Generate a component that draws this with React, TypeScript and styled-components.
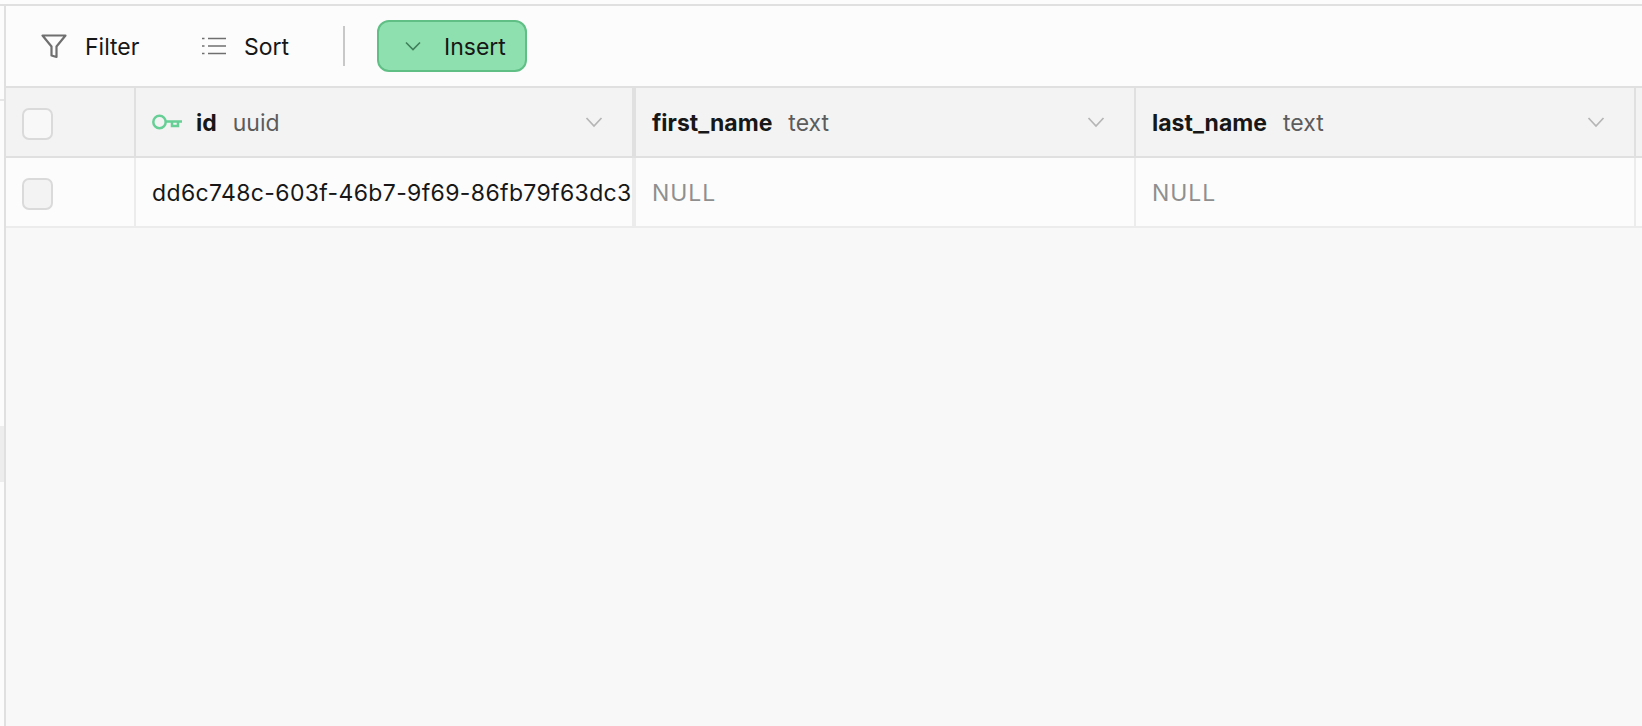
import React from 'react';
import styled, { createGlobalStyle } from 'styled-components';

const GlobalStyle = createGlobalStyle`
  html, body {
    margin: 0;
    padding: 0;
    height: 100%;
    overflow: hidden;
    background: #fcfcfc;
  }
  * {
    box-sizing: border-box;
  }
`;

const COLUMNS = '130px 496px 4px 500px 500px 1fr';

const Page = styled.div`
  height: 100vh;
  display: flex;
  flex-direction: column;
  padding-top: 4px;
  font-family: Inter, 'Noto Sans', sans-serif;
  color: #171717;
`;

const Frame = styled.div`
  flex: 1;
  display: flex;
  min-height: 0;
  border-top: 2px solid #e0e0e0;
`;

const Gutter = styled.div`
  width: 6px;
  flex: none;
  border-right: 2px solid #e0e0e0;
  background: #fcfcfc;
`;

const GutterLine = styled.div`
  height: 2px;
  margin-top: 93px;
  background: #e6e6e6;
`;

const GutterBlock = styled.div`
  height: 56px;
  margin-top: 325px;
  background: #ededed;
`;

const Main = styled.div`
  flex: 1;
  display: flex;
  flex-direction: column;
  min-width: 0;
  background: #f8f8f8;
`;

const Toolbar = styled.div`
  height: 82px;
  flex: none;
  display: flex;
  align-items: center;
  background: #fcfcfc;
  border-bottom: 2px solid #e0e0e0;
`;

const ToolButton = styled.div<{ $width: number; $gap: number; $left: number }>`
  display: flex;
  align-items: center;
  gap: ${(p) => p.$gap}px;
  width: ${(p) => p.$width}px;
  padding-left: ${(p) => p.$left}px;
  font-size: 23px;
  line-height: 28px;
`;

const ToolLabel = styled.span`
  padding-top: 2px;
`;

const Divider = styled.div`
  width: 2px;
  height: 40px;
  margin-right: 32px;
  background: #c8c8c8;
`;

const InsertButton = styled.div`
  width: 150px;
  height: 52px;
  display: flex;
  align-items: center;
  gap: 23px;
  padding-left: 26px;
  font-size: 23px;
  background: #8ee0ae;
  border: 2px solid #5fbf85;
  border-radius: 12px;
`;

const Row = styled.div<{ $head?: boolean }>`
  height: 70px;
  flex: none;
  display: grid;
  grid-template-columns: ${COLUMNS};
  background: ${(p) => (p.$head ? '#f3f3f3' : '#fcfcfc')};
  border-bottom: 2px solid ${(p) => (p.$head ? '#e0e0e0' : '#ececec')};
`;

const Cell = styled.div<{ $head?: boolean; $bare?: boolean }>`
  display: flex;
  align-items: center;
  min-width: 0;
  padding: 0 ${(p) => (p.$bare ? 0 : 30)}px 0 16px;
  font-size: 23px;
  white-space: nowrap;
  border-right: ${(p) => (p.$bare ? 'none' : `2px solid ${p.$head ? '#e0e0e0' : '#ececec'}`)};
`;

const IdHeadCell = styled(Cell)`
  padding-right: 30px;
`;

const DataValue = styled.span`
  letter-spacing: 0.36px;
  padding-top: 1px;
`;

const ThickRule = styled.div<{ $head?: boolean }>`
  background: ${(p) => (p.$head ? '#e0e0e0' : '#ececec')};
`;

const Checkbox = styled.div<{ $filled?: boolean }>`
  width: 31px;
  height: 32px;
  margin-top: 3px;
  border: 2px solid #dadada;
  border-radius: 7px;
  background: ${(p) => (p.$filled ? '#f3f3f3' : '#f8f8f8')};
`;

const ColumnName = styled.span`
  font-weight: 700;
  padding-top: 2px;
`;

const ColumnType = styled.span`
  margin-left: 16px;
  padding-top: 2px;
  color: #5c5c5c;
`;

const NullValue = styled.span`
  color: #8f8f8f;
  letter-spacing: 0.9px;
  padding-top: 1px;
`;

const HeadChevron = styled.svg`
  margin-left: auto;
  margin-right: -1px;
  flex: none;
`;

const KeyIcon = styled.svg`
  margin-right: 14px;
  flex: none;
`;

const Chevron = ({ color = '#b5b5b5' }: { color?: string }) => (
  <HeadChevron width="18" height="12" viewBox="0 0 18 12" fill="none" stroke={color} strokeWidth="1.7">
    <path d="M1.5 2 L9 10 L16.5 2" />
  </HeadChevron>
);

const HeaderLabel = ({ name, type }: { name: string; type: string }) => (
  <>
    <ColumnName>{name}</ColumnName>
    <ColumnType>{type}</ColumnType>
    <Chevron />
  </>
);

export default function App() {
  return (
    <Page>
      <GlobalStyle />
      <Frame>
        <Gutter>
          <GutterLine />
          <GutterBlock />
        </Gutter>
        <Main>
          <Toolbar>
            <ToolButton $width={196} $gap={18} $left={35}>
              <svg width="26" height="26" viewBox="0 0 26 26" fill="none" stroke="#6f6f6f" strokeWidth="2.2">
                <path d="M1.5 2.5 H24.5 L15.5 13.5 V24 L10.5 22.5 V13.5 Z" strokeLinejoin="round" />
              </svg>
              <ToolLabel>Filter</ToolLabel>
            </ToolButton>
            <ToolButton $width={141} $gap={18} $left={0}>
              <svg width="24" height="20" viewBox="0 0 24 20" fill="none" stroke="#6f6f6f" strokeWidth="1.5">
                <path d="M6 2.5 H24 M6 10 H24 M6 17.5 H24" />
                <path d="M0 2.5 H2.5 M0 10 H2.5 M0 17.5 H2.5" />
              </svg>
              <ToolLabel>Sort</ToolLabel>
            </ToolButton>
            <Divider />
            <InsertButton>
              <svg width="16" height="10" viewBox="0 0 16 10" fill="none" stroke="#3f7f5a" strokeWidth="1.6">
                <path d="M1 1.5 L8 8.5 L15 1.5" />
              </svg>
              <ToolLabel>Insert</ToolLabel>
            </InsertButton>
          </Toolbar>
          <Row $head>
            <Cell $head>
              <Checkbox />
            </Cell>
            <IdHeadCell $head $bare>
              <KeyIcon width="30" height="16" viewBox="0 0 30 16" fill="none" stroke="#66cf95" strokeWidth="2.5">
                <circle cx="7.5" cy="8" r="6.2" />
                <path d="M13.5 7.5 H30 M20 7.5 V12 H26 V7.5" />
              </KeyIcon>
              <ColumnName>id</ColumnName>
              <ColumnType>uuid</ColumnType>
              <Chevron />
            </IdHeadCell>
            <ThickRule $head />
            <Cell $head>
              <HeaderLabel name="first_name" type="text" />
            </Cell>
            <Cell $head>
              <HeaderLabel name="last_name" type="text" />
            </Cell>
            <div />
          </Row>
          <Row>
            <Cell>
              <Checkbox $filled />
            </Cell>
            <Cell $bare>
              <DataValue>dd6c748c-603f-46b7-9f69-86fb79f63dc3</DataValue>
            </Cell>
            <ThickRule />
            <Cell>
              <NullValue>NULL</NullValue>
            </Cell>
            <Cell>
              <NullValue>NULL</NullValue>
            </Cell>
            <div />
          </Row>
        </Main>
      </Frame>
    </Page>
  );
}
